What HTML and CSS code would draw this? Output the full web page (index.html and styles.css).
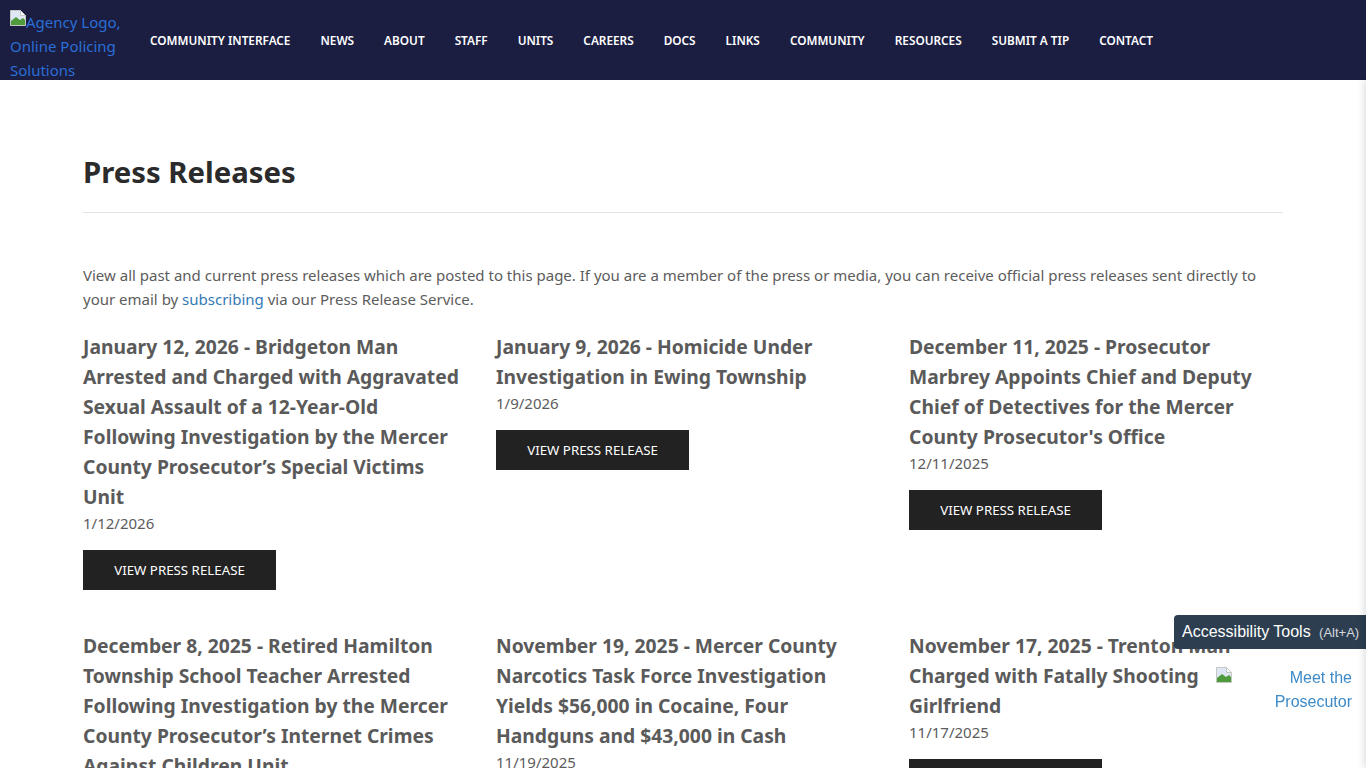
FILE: index.html
```html
<!DOCTYPE html>
<html lang="en">
<head>
    <meta charset="UTF-8">
    <title>Press Releases</title>
    <link rel="stylesheet" href="styles.css">
</head>
<body>
<header class="topbar">
    <a href="#" class="logo">
        <svg class="broken-img" width="16" height="16" viewBox="0 0 16 16"><path d="M0.5 0.5H10.5L15.5 5.5V15.5H0.5Z" fill="#dfe6f4" stroke="#c4c8c4"/><path d="M1 15L1 11L6 7L10 10L13 8L15 10V15Z" fill="#4f9a3c"/><path d="M10.5 0.5V5.5H15.5Z" fill="#ffffff" stroke="#c4c8c4"/></svg>Agency Logo, Online Policing Solutions
    </a>
    <nav class="nav">
        <a href="#">COMMUNITY INTERFACE</a>
        <a href="#">NEWS</a>
        <a href="#">ABOUT</a>
        <a href="#">STAFF</a>
        <a href="#">UNITS</a>
        <a href="#">CAREERS</a>
        <a href="#">DOCS</a>
        <a href="#">LINKS</a>
        <a href="#">COMMUNITY</a>
        <a href="#">RESOURCES</a>
        <a href="#">SUBMIT A TIP</a>
        <a href="#">CONTACT</a>
    </nav>
</header>

<main class="container">
    <h1>Press Releases</h1>
    <p class="intro">View all past and current press releases which are posted to this page. If you are a member of the press or media, you can receive official press releases sent directly to your email by <a href="#">subscribing</a> via our Press Release Service.</p>

    <div class="releases">
        <article class="release">
            <h3>January 12, 2026 - Bridgeton Man Arrested and Charged with Aggravated Sexual Assault of a 12-Year-Old Following Investigation by the Mercer County Prosecutor’s Special Victims Unit</h3>
            <p class="date">1/12/2026</p>
            <a href="#" class="btn">VIEW PRESS RELEASE</a>
        </article>
        <article class="release">
            <h3>January 9, 2026 - Homicide Under Investigation in Ewing Township</h3>
            <p class="date">1/9/2026</p>
            <a href="#" class="btn">VIEW PRESS RELEASE</a>
        </article>
        <article class="release">
            <h3>December 11, 2025 - Prosecutor Marbrey Appoints Chief and Deputy Chief of Detectives for the Mercer County Prosecutor's Office</h3>
            <p class="date">12/11/2025</p>
            <a href="#" class="btn">VIEW PRESS RELEASE</a>
        </article>
        <article class="release">
            <h3>December 8, 2025 - Retired Hamilton Township School Teacher Arrested Following Investigation by the Mercer County Prosecutor’s Internet Crimes Against Children Unit</h3>
            <p class="date">12/8/2025</p>
            <a href="#" class="btn">VIEW PRESS RELEASE</a>
        </article>
        <article class="release">
            <h3>November 19, 2025 - Mercer County Narcotics Task Force Investigation Yields $56,000 in Cocaine, Four Handguns and $43,000 in Cash</h3>
            <p class="date">11/19/2025</p>
            <a href="#" class="btn">VIEW PRESS RELEASE</a>
        </article>
        <article class="release">
            <h3>November 17, 2025 - Trenton Man Charged with Fatally Shooting Girlfriend</h3>
            <p class="date">11/17/2025</p>
            <a href="#" class="btn">VIEW PRESS RELEASE</a>
        </article>
    </div>
</main>

<button class="a11y-tools">Accessibility Tools <span>(Alt+A)</span></button>
<a href="#" class="meet-link">
    <svg class="broken-img side-img" width="16" height="16" viewBox="0 0 16 16"><path d="M0.5 0.5H10.5L15.5 5.5V15.5H0.5Z" fill="#dfe6f4" stroke="#c4c8c4"/><path d="M1 15L1 11L6 7L10 10L13 8L15 10V15Z" fill="#4f9a3c"/><path d="M10.5 0.5V5.5H15.5Z" fill="#ffffff" stroke="#c4c8c4"/></svg>
    Meet the Prosecutor
</a>
<div class="side-panel"></div>
</body>
</html>
```
FILE: styles.css
```css
html, body {
    height: 100%;
    overflow: hidden;
}

body {
    margin: 0;
    background-color: #FFFFFF;
    color: #5c5c5c;
    font-family: "Noto Sans", "Open Sans", sans-serif;
    font-size: 15px;
    line-height: 24px;
}

a {
    color: #337ab7;
    text-decoration: none;
}

.topbar {
    display: flex;
    align-items: center;
    height: 80px;
    background-color: #1b1d41;
    overflow: hidden;
}

.logo {
    flex: none;
    width: 120px;
    margin: 11px 0 0 10px;
    color: #2a6fd6;
    font-size: 15px;
    line-height: 24px;
}

.broken-img {
    vertical-align: top;
}

.nav {
    display: flex;
    gap: 30px;
    margin-left: 20px;
}

.nav a {
    color: #FFFFFF;
    font-size: 11.8px;
    font-weight: 600;
}

.container {
    width: 1200px;
    margin: 0 auto;
    padding-top: 70px;
}

h1 {
    margin: 0;
    padding-bottom: 18px;
    border-bottom: 1px solid #e5e5e5;
    color: #2b2b2b;
    font-size: 29.3px;
    line-height: 44px;
    font-weight: 700;
}

.intro {
    margin: 50px 0 20px;
}

.releases {
    display: grid;
    grid-template-columns: repeat(3, 381px);
    column-gap: 32px;
    row-gap: 40px;
    align-items: start;
}

.release h3 {
    margin: 0 0 -1px;
    padding-top: 1px;
    color: #5a5a5a;
    font-size: 19.3px;
    line-height: 30px;
    font-weight: 700;
}

.date {
    margin: 0 0 15px;
    font-size: 15px;
    line-height: 24px;
}

.btn {
    display: block;
    width: 193px;
    height: 40px;
    background-color: #222222;
    color: #FFFFFF;
    font-size: 13.3px;
    line-height: 40px;
    text-align: center;
}

.a11y-tools {
    position: fixed;
    right: 0;
    top: 615px;
    width: 192px;
    height: 34px;
    padding: 0 0 0 8px;
    border: none;
    border-radius: 4px 0 0 4px;
    background-color: #2c3e50;
    color: #FFFFFF;
    font-family: "Liberation Sans", Arial, sans-serif;
    font-size: 16px;
    text-align: left;
    white-space: nowrap;
}

.a11y-tools span {
    margin-left: 4px;
    font-size: 13px;
    opacity: 0.8;
}

.meet-link {
    position: fixed;
    right: 14px;
    top: 666px;
    width: 136px;
    color: #3d8ac7;
    font-family: "Liberation Sans", Arial, sans-serif;
    font-size: 16px;
    line-height: 24px;
    text-align: right;
}

.side-img {
    float: left;
    margin-top: 1px;
}

/* closed panel, only its shadow shows at the right edge */
.side-panel {
    position: fixed;
    top: 80px;
    bottom: 0;
    left: 100%;
    width: 20px;
    box-shadow: 0 0 10px rgba(0, 0, 0, 0.2);
}
```
